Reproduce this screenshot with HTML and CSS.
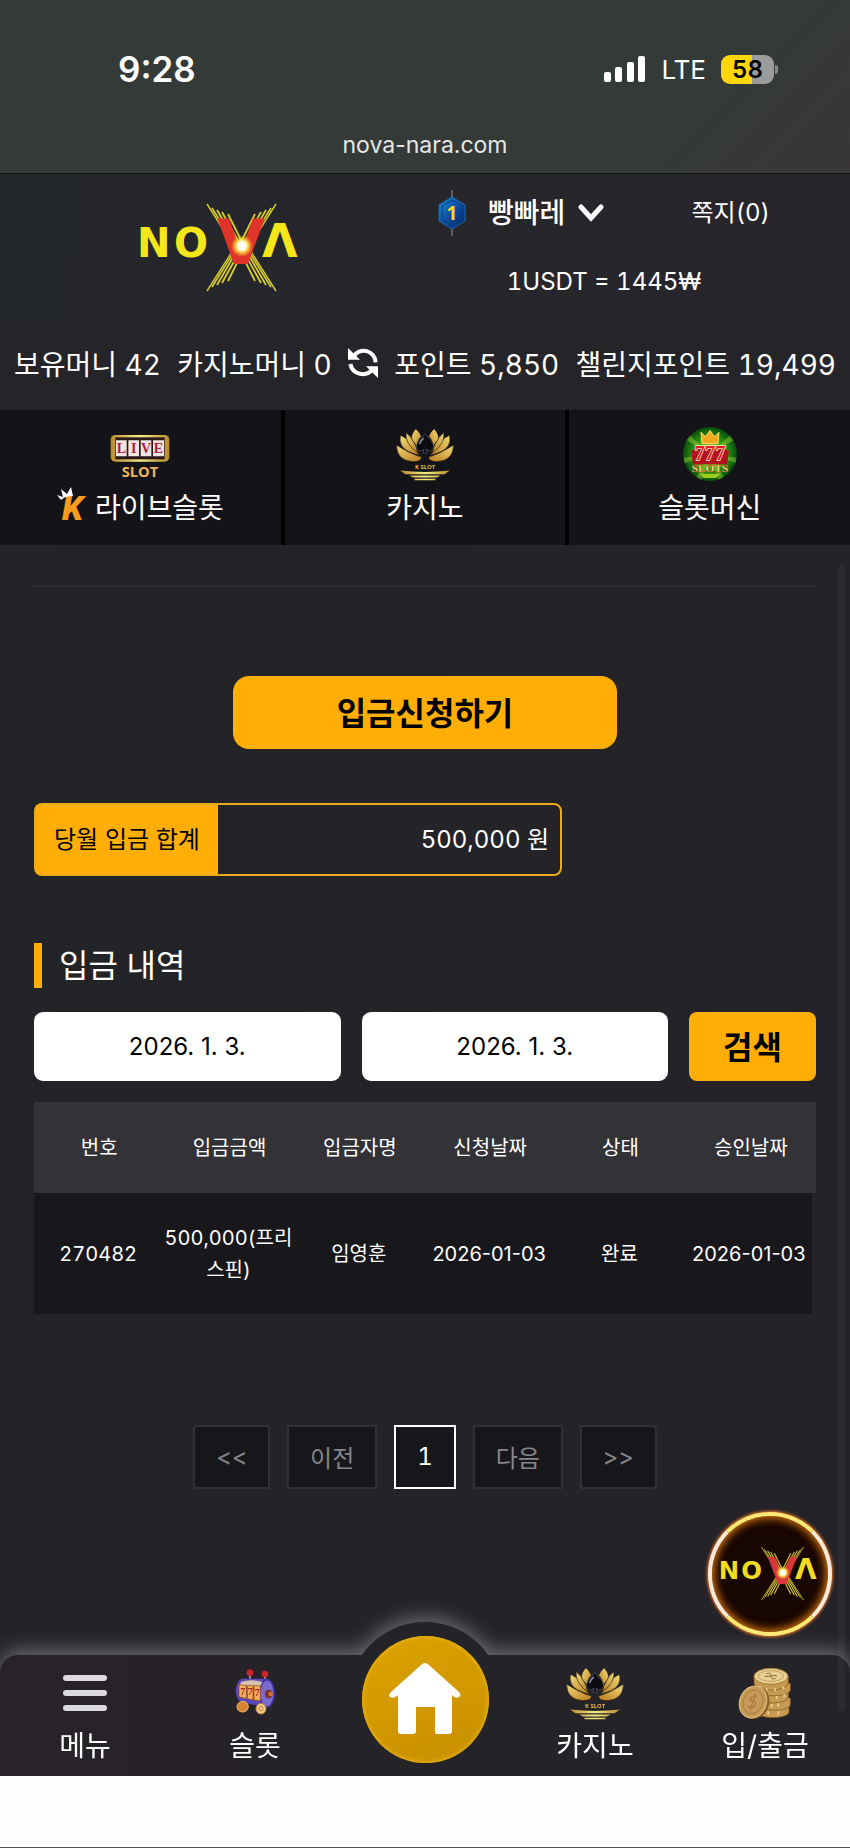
FILE: index.html
```html
<!DOCTYPE html>
<html lang="ko">
<head>
    <meta charset="UTF-8">
    <meta name="viewport" content="width=device-width, initial-scale=1.0">
    <title>NOVA - 입금신청</title>
    <link rel="stylesheet" href="styles.css">
</head>
<body>
    <!-- 공용 심볼 -->
    <svg class="symbols" aria-hidden="true">
        <defs>
            <linearGradient id="gold" x1="0" y1="0" x2="1" y2="1">
                <stop offset="0" stop-color="#f3dc7a"/>
                <stop offset="1" stop-color="#b97a1c"/>
            </linearGradient>
            <linearGradient id="gold-bar" x1="0" y1="0" x2="1" y2="0">
                <stop offset="0" stop-color="#b98a2c"/>
                <stop offset=".5" stop-color="#f8ee86"/>
                <stop offset="1" stop-color="#b98a2c"/>
            </linearGradient>
            <radialGradient id="flare">
                <stop offset="0" stop-color="#fff"/>
                <stop offset=".4" stop-color="#fffbe0"/>
                <stop offset=".6" stop-color="#ffe94a" stop-opacity=".8"/>
                <stop offset="1" stop-color="#ffd500" stop-opacity="0"/>
            </radialGradient>
            <radialGradient id="green">
                <stop offset="0" stop-color="#b5e61d"/>
                <stop offset=".6" stop-color="#2f9a12"/>
                <stop offset="1" stop-color="#064d0c"/>
            </radialGradient>
            <linearGradient id="blue" x1="0" y1="0" x2="1" y2="1">
                <stop offset="0" stop-color="#1d8fd8"/>
                <stop offset=".5" stop-color="#0b4fa0"/>
                <stop offset="1" stop-color="#06205c"/>
            </linearGradient>
            <g id="petals">
                <path d="M3 55Q3 104 55 106Q78 106 80 92Q45 82 3 55Z"/>
                <path d="M15 25Q8 60 40 75Q60 84 74 86Q50 40 15 25Z"/>
                <path d="M32 17Q28 50 68 80Q62 40 32 17Z"/>
                <path d="M62 5Q44 25 51 40Q66 56 66 70Q62 45 79 28Q74 15 62 5Z"/>
            </g>
            <g id="ray" fill="none" stroke="#d6cc30">
                <path d="M88 14L116 58" stroke-width="1.4"/>
                <path d="M93 18L118 58" stroke-width="1.6"/>
                <path d="M98 20L120 58" stroke-width="1.8"/>
                <path d="M103 22L123 58" stroke-width="1.8"/>
                <path d="M109 24L126 58" stroke-width="1.8"/>
            </g>
            <g id="streaks">
                <use href="#ray"/>
                <use href="#ray" transform="translate(245 0) scale(-1 1)"/>
                <use href="#ray" transform="translate(0 115) scale(1 -1)"/>
                <use href="#ray" transform="translate(245 115) scale(-1 -1)"/>
            </g>
            <g id="lotus">
                <g stroke="#141418" stroke-width="2">
                    <use href="#petals" fill="url(#gold)"/>
                    <use href="#petals" fill="url(#gold)" transform="translate(180 0) scale(-1 1)"/>
                </g>
                <path d="M90 20C80 36 64 44 64 60C64 73 80 77 87 67L84 80H96L93 67C100 77 116 73 116 60C116 44 100 36 90 20Z" fill="#0b0b12" stroke="#5b5b70" stroke-width="2"/>
                <path d="M73 52Q76 42 86 34" fill="none" stroke="#8d8da0" stroke-width="5"/>
                <path d="M14 133Q90 142 166 133L150 144H30ZM42 148H138L126 154H54ZM58 158H122V163H58Z" fill="url(#gold-bar)"/>
            </g>
        </defs>
    </svg>

    <div class="status">
        <div class="status-row">
            <span class="clock">9:28</span>
            <div class="status-icons">
                <svg width="42" height="28" viewBox="0 0 42 28" fill="#fff" aria-hidden="true">
                    <rect x="0" y="17" width="7" height="10" rx="2"/>
                    <rect x="11" y="12" width="7" height="15" rx="2"/>
                    <rect x="23" y="7" width="7" height="20" rx="2"/>
                    <rect x="34" y="1" width="7" height="26" rx="2"/>
                </svg>
                <span class="network">LTE</span>
                <span class="battery">58</span>
            </div>
        </div>
        <div class="url">nova-nara.com</div>
    </div>

    <header class="header">
        <a class="logo" href="#">
            <svg width="200" height="110" viewBox="2 4 200 110">
                <use href="#streaks"/>
                <text class="nova-text" x="18" y="67" font-size="40" fill="#f5e51b">N</text>
                <text class="nova-text" x="55" y="67" font-size="40" fill="#f5e51b">O</text>
                <text class="nova-text" x="143" y="67" font-size="46" fill="#f5e51b">Λ</text>
                <text class="nova-text" x="98" y="74" font-size="62" fill="#e0342b">V</text>
                <circle cx="123" cy="56" r="11" fill="url(#flare)"/>
            </svg>
        </a>
        <div class="account">
            <div class="account-row">
                <button class="user" type="button">
                    <svg width="28" height="48" viewBox="0 0 28 48" aria-hidden="true">
                        <path d="M14 1V47" stroke="#9a9a90" stroke-width="1"/>
                        <path d="M14 8L27 16V32L14 40L1 32V16Z" fill="url(#blue)" stroke="#1b6bb0"/>
                        <path d="M14 11L24 17V31L14 37L4 31V17Z" fill="none" stroke="#0a3a80"/>
                        <text class="badge-text" x="14" y="31" font-size="19" fill="#ffd52e" text-anchor="middle">1</text>
                    </svg>
                    <span>빵빠레</span>
                    <svg width="28" height="18" viewBox="0 0 28 18" fill="none" stroke="#fff" stroke-width="5" stroke-linecap="round" aria-hidden="true">
                        <path d="M4 3L14 14L24 3"/>
                    </svg>
                </button>
                <a class="note" href="#">쪽지(0)</a>
            </div>
            <div class="rate">1USDT = 1445₩</div>
        </div>
    </header>

    <div class="money">
        <span>보유머니 42</span>
        <span>카지노머니 0</span>
        <button class="refresh" type="button" aria-label="새로고침">
            <svg width="30" height="30" viewBox="0 0 90 90" aria-hidden="true">
                <path d="M16 26A36 36 0 0 1 83 43M7 48A38 38 0 0 0 74 64" fill="none" stroke="#fff" stroke-width="12"/>
                <path d="M0 0L36 35H0ZM90 90L54 55H90Z" fill="#fff"/>
            </svg>
        </button>
        <span>포인트 5,850</span>
        <span>챌린지포인트 19,499</span>
    </div>

    <nav class="games">
        <a href="#">
            <svg width="60" height="54" viewBox="0 0 180 162" aria-hidden="true">
                <rect x="2" y="24" width="176" height="80" rx="14" fill="url(#gold-bar)"/>
                <rect x="16" y="31" width="148" height="66" fill="#2a1718"/>
                <path d="M18 40H50V88H18ZM55 40H87V88H55ZM92 40H124V88H92ZM129 40H162V88H129Z" fill="#f0e4e0"/>
                <g class="live-text" font-size="42" fill="#a8203c" text-anchor="middle">
                    <text x="34" y="78">L</text><text x="71" y="78">I</text><text x="108" y="78">V</text><text x="145" y="78">E</text>
                </g>
                <text class="slot-text" x="90" y="150" font-size="44" fill="#f1b45c" text-anchor="middle">SLOT</text>
            </svg>
            <span class="game-name">
                <svg width="34" height="44" viewBox="0 -2 34 44" aria-hidden="true">
                    <text class="k-text" x="5" y="34" font-size="34" fill="#f89c1c">K</text>
                    <path d="M4 14L0 9L6 11L4 3L10 8L14 1L16 10Q8 10 4 14Z" fill="#fff"/>
                </svg>
                라이브슬롯
            </span>
        </a>
        <a href="#">
            <svg width="60" height="54" viewBox="0 0 180 165" aria-hidden="true">
                <use href="#lotus"/>
                <text class="slot-text" x="90" y="128" font-size="18" fill="#e8b456" text-anchor="middle">K SLOT</text>
            </svg>
            <span class="game-name">카지노</span>
        </a>
        <a href="#">
            <svg width="54" height="54" viewBox="0 0 162 162" aria-hidden="true">
                <circle cx="81" cy="81" r="81" fill="url(#green)"/>
                <path d="M81 81L10 40L22 26ZM81 81L140 26L152 40ZM81 81L2 92L4 108ZM81 81L160 92L158 108ZM81 81L40 150L56 158ZM81 81L122 150L106 158Z" fill="#c9f04a" opacity=".35"/>
                <path d="M57 50L54 16L68 30L81 10L94 30L108 16L105 50Z" fill="#f6a81c" stroke="#ffe06a" stroke-width="3"/>
                <path d="M24 72Q81 40 138 72L132 112H30Z" fill="#b3121f"/>
                <text class="seven-text" x="81" y="100" font-size="62" fill="#e21a2c" stroke="#fff3c4" stroke-width="4" text-anchor="middle">777</text>
                <text class="live-text" x="81" y="134" font-size="34" fill="#ffe79a" stroke="#c2410c" stroke-width="1" text-anchor="middle">SLOTS</text>
                <path d="M50 140H112L100 153H62Z" fill="#9ccc1c"/>
            </svg>
            <span class="game-name">슬롯머신</span>
        </a>
    </nav>

    <main class="content">
        <hr class="divider">
        <button class="apply" type="button">입금신청하기</button>

        <div class="total">
            <span class="total-label">당월 입금 합계</span>
            <span class="total-value">500,000 원</span>
        </div>

        <h2 class="title">입금 내역</h2>
        <form class="search">
            <input type="text" aria-label="시작일" value="2026. 1. 3.">
            <input type="text" aria-label="종료일" value="2026. 1. 3.">
            <button type="button">검색</button>
        </form>

        <table class="history">
            <thead>
                <tr>
                    <th>번호</th>
                    <th>입금금액</th>
                    <th>입금자명</th>
                    <th>신청날짜</th>
                    <th>상태</th>
                    <th>승인날짜</th>
                </tr>
            </thead>
            <tbody>
                <tr>
                    <td>270482</td>
                    <td>500,000(프리스핀)</td>
                    <td>임영훈</td>
                    <td class="date">2026-01-03</td>
                    <td>완료</td>
                    <td class="date">2026-01-03</td>
                </tr>
            </tbody>
        </table>

        <div class="paging">
            <button type="button">&lt;&lt;</button>
            <button type="button">이전</button>
            <button type="button" class="active">1</button>
            <button type="button">다음</button>
            <button type="button">&gt;&gt;</button>
        </div>

        <a class="floating" href="#">
            <svg width="122" height="67" viewBox="2 4 200 110">
                <use href="#streaks"/>
                <text class="nova-text" x="18" y="67" font-size="40" fill="#f0dc22">N</text>
                <text class="nova-text" x="55" y="67" font-size="40" fill="#f0dc22">O</text>
                <text class="nova-text" x="143" y="67" font-size="46" fill="#f0dc22">Λ</text>
                <text class="nova-text" x="98" y="74" font-size="62" fill="#d8383a">V</text>
                <circle cx="123" cy="56" r="11" fill="url(#flare)"/>
            </svg>
        </a>
        <div class="scrollbar"></div>
    </main>

    <nav class="bottom">
        <a href="#">
            <svg width="60" height="54" viewBox="0 0 60 54" fill="#dcd9e0" aria-hidden="true">
                <rect x="8" y="9" width="44" height="6" rx="3"/>
                <rect x="8" y="24" width="44" height="6" rx="3"/>
                <rect x="8" y="39" width="44" height="6" rx="3"/>
            </svg>
            <span>메뉴</span>
        </a>
        <a href="#">
            <svg width="60" height="54" viewBox="0 0 180 162" aria-hidden="true">
                <path d="M75 40V20M120 44V22" stroke="#a8a0b0" stroke-width="5"/>
                <circle cx="75" cy="20" r="10" fill="#c8262c"/>
                <circle cx="120" cy="24" r="10" fill="#c8262c"/>
                <path d="M50 38H125Q148 50 148 80Q146 112 124 124L46 108Q32 94 32 74Q34 46 50 38Z" fill="#5b48b8"/>
                <ellipse cx="126" cy="82" rx="22" ry="41" fill="#7a6ad0" stroke="#41309a" stroke-width="5"/>
                <ellipse cx="131" cy="84" rx="11" ry="13" fill="#7b3325"/>
                <circle cx="137" cy="84" r="7" fill="#d96d2c"/>
                <path d="M48 48Q80 38 112 48L106 60H44Z" fill="#d8c3ae"/>
                <path d="M42 56L64 58V98L42 92ZM67 58L84 59V101L67 98ZM87 59L106 60V104L87 102Z" fill="#f3b05a" stroke="#97451e" stroke-width="2"/>
                <g class="live-text" font-size="30" fill="#b31f2a" text-anchor="middle">
                    <text x="53" y="86">7</text><text x="76" y="88">7</text><text x="97" y="90">7</text>
                </g>
                <ellipse cx="53" cy="122" rx="17" ry="16" fill="#d98332" stroke="#f5b96a" stroke-width="3"/>
                <ellipse cx="108" cy="128" rx="15" ry="16" fill="#f2cd84" stroke="#b9803a" stroke-width="3"/>
                <ellipse cx="108" cy="128" rx="6" ry="7" fill="none" stroke="#b9803a" stroke-width="3"/>
            </svg>
            <span>슬롯</span>
        </a>
        <a class="home" href="#" aria-label="홈">
            <span class="home-coin">
                <svg width="72" height="72" viewBox="0 0 72 72" fill="#fff" aria-hidden="true">
                    <path d="M36 0Q38 0 40 2L70 29Q73 33 70 34Q67 36 64 33L63 32V68Q63 71 60 71H48Q46 71 46 68V44H27V68Q27 71 24 71H12Q9 71 9 68V32L8 33Q4 36 1 34Q-1 32 2 29L32 2Q34 0 36 0Z"/>
                </svg>
            </span>
        </a>
        <a href="#">
            <svg width="60" height="54" viewBox="0 0 180 165" aria-hidden="true">
                <use href="#lotus"/>
                <text class="slot-text" x="90" y="128" font-size="18" fill="#e8b456" text-anchor="middle">K SLOT</text>
            </svg>
            <span>카지노</span>
        </a>
        <a href="#">
            <svg width="60" height="54" viewBox="0 0 180 162" aria-hidden="true">
                <g fill="#c79a52" stroke="#80561f" stroke-width="2">
                    <path d="M66 118V138A48 17 0 0 0 162 138V118Z"/>
                    <path d="M70 96V116A48 17 0 0 0 166 116V96Z"/>
                    <path d="M64 74V94A48 17 0 0 0 160 94V74Z"/>
                    <path d="M68 52V72A48 17 0 0 0 166 72V52Z"/>
                    <path d="M57 30V50A51 22 0 0 0 160 50V30Z"/>
                </g>
                <path d="M75 60V68M95 66V74M120 67V75M145 61V69M90 88V98M125 90V100M148 84V94M130 112V122M110 114V124M100 136V146M130 136V146" stroke="#f0d190" stroke-width="5"/>
                <ellipse cx="108" cy="31" rx="51" ry="24" fill="#e9cf94" stroke="#a47a38" stroke-width="3"/>
                <ellipse cx="108" cy="30" rx="38" ry="16" fill="none" stroke="#b18a4a" stroke-width="2"/>
                <path d="M94 24Q108 16 108 30T124 36M88 32L126 28" fill="none" stroke="#94702f" stroke-width="3"/>
                <ellipse cx="60" cy="110" rx="42" ry="50" fill="#8b6027" transform="rotate(22 60 110)"/>
                <ellipse cx="54" cy="108" rx="40" ry="49" fill="#c79a58" stroke="#e3c083" stroke-width="3" transform="rotate(22 54 108)"/>
                <ellipse cx="54" cy="108" rx="29" ry="37" fill="none" stroke="#96703a" stroke-width="2" transform="rotate(22 54 108)"/>
                <path d="M66 92Q48 86 46 102Q68 106 60 120Q50 130 38 120M62 82L46 132" fill="none" stroke="#a67c40" stroke-width="4"/>
            </svg>
            <span>입/출금</span>
        </a>
    </nav>
    <div class="safe-area"></div>
</body>
</html>
```
FILE: styles.css
```css
* {
    box-sizing: border-box;
}

body {
    margin: 0;
    min-height: 100vh;
    display: flex;
    flex-direction: column;
    background: #242328;
    color: #fff;
    font-family: Inter, "Noto Sans CJK KR", sans-serif;
    font-size: 28px;
    font-variant-numeric: tabular-nums;
}

a {
    color: inherit;
    text-decoration: none;
}

button {
    padding: 0;
    border: 0;
    background: none;
    color: inherit;
    font: inherit;
    cursor: pointer;
}

svg {
    display: block;
}

.symbols {
    position: absolute;
    width: 0;
    height: 0;
}

.nova-text {
    font-family: "DejaVu Sans", sans-serif;
    font-weight: bold;
}

.slot-text,
.badge-text {
    font-family: "Open Sans", sans-serif;
    font-weight: bold;
}

.live-text,
.seven-text {
    font-family: "Liberation Serif", serif;
    font-weight: bold;
}

.seven-text {
    paint-order: stroke;
}

.k-text {
    font-family: Roboto, sans-serif;
    font-weight: 900;
    font-style: italic;
}

/* 상태바 */
.status {
    padding: 45px 0 12px;
    border-bottom: 1px solid #111415;
    background: linear-gradient(135deg, #343a37 80%, #3a3637);
}

.status-row {
    display: flex;
    align-items: center;
    justify-content: space-between;
    height: 48px;
    margin-bottom: 36px;
    padding: 0 72px 0 118px;
}

.clock {
    font-size: 35px;
    font-weight: 600;
    font-variant-numeric: normal;
}

.status-icons {
    display: flex;
    align-items: center;
    gap: 15px;
}

.network {
    font-size: 26px;
}

.battery {
    position: relative;
    width: 53px;
    height: 29px;
    margin-right: 4px;
    border-radius: 9px;
    background: linear-gradient(90deg, #ffd60a 58%, #9b9b9b 58%);
    color: #000;
    font-size: 24px;
    font-weight: 600;
    line-height: 29px;
    text-align: center;
}

.battery::after {
    content: "";
    position: absolute;
    top: 10px;
    right: -4px;
    width: 3px;
    height: 9px;
    border-radius: 0 3px 3px 0;
    background: #8b8b8b;
}

.url {
    color: #e6e8e7;
    font-size: 23px;
    font-variant-numeric: normal;
    line-height: 32px;
    text-align: center;
}

/* 헤더 */
.header {
    display: flex;
    align-items: center;
    height: 150px;
    background: linear-gradient(100deg, #24272b, #28252b);
}

.logo {
    display: flex;
    justify-content: center;
    width: 52%;
}

.account {
    flex: 1;
    display: flex;
    flex-direction: column;
    gap: 31px;
    margin-right: 80px;
    margin-left: -4px;
    padding-bottom: 3px;
    line-height: 38px;
}

.account-row {
    display: flex;
    align-items: center;
    justify-content: space-between;
}

.user {
    display: flex;
    align-items: center;
    height: 38px;
    font-weight: 500;
}

.user span {
    margin: 0 12px 0 22px;
}

.note {
    font-size: 24px;
}

.rate {
    font-size: 24px;
    text-align: center;
}

/* 보유금액 */
.money {
    display: flex;
    align-items: center;
    justify-content: space-between;
    height: 86px;
    padding: 0 14px 8px;
    background: #242429;
    white-space: nowrap;
}

/* 게임 메뉴 */
.games {
    display: grid;
    grid-template-columns: repeat(3, 1fr);
    gap: 4px;
    background: #000;
}

.games a {
    display: flex;
    flex-direction: column;
    align-items: center;
    height: 135px;
    padding-top: 17px;
    background: #141418;
}

.game-name {
    display: flex;
    align-items: center;
    gap: 4px;
    height: 40px;
    margin-top: 5px;
}

/* 본문 */
.content {
    position: relative;
    flex: 1;
    padding: 40px 34px 0;
    background: linear-gradient(100deg, #222427, #242328 50%, #252329);
}

.divider {
    height: 2px;
    margin: 0;
    border: 0;
    background: #2c2c31;
}

.apply {
    display: block;
    width: 384px;
    height: 73px;
    margin: 89px auto 54px;
    padding-bottom: 4px;
    border-radius: 16px;
    background: #ffae05;
    color: #000;
    font-size: 32px;
    font-weight: bold;
}

.total {
    display: flex;
    align-items: center;
    justify-content: space-between;
    max-width: 528px;
    height: 73px;
    border: 2px solid #eba91c;
    border-radius: 8px;
    font-size: 24px;
}

.total-label {
    display: flex;
    align-items: center;
    justify-content: center;
    width: 182px;
    height: 100%;
    padding-bottom: 4px;
    background: #ffae05;
    color: #000;
    font-family: "Noto Sans CJK KR", sans-serif;
}

.total-value {
    padding: 0 11px 4px 0;
}

.title {
    margin: 67px 0 24px;
    padding-left: 17px;
    border-left: 8px solid #ffae05;
    font-size: 32px;
    font-weight: normal;
    line-height: 45px;
}

.search {
    display: grid;
    grid-template-columns: 1fr 1fr 127px;
    gap: 21px;
    height: 69px;
    margin-bottom: 21px;
}

.search input {
    min-width: 0;
    border: 0;
    border-radius: 9px;
    background: #fff;
    color: #000;
    font-family: Inter, sans-serif;
    font-size: 24px;
    text-align: center;
}

.search button {
    padding-bottom: 4px;
    border-radius: 8px;
    background: #ffae05;
    color: #000;
    font-size: 32px;
    font-weight: bold;
}

.history {
    width: 100%;
    table-layout: fixed;
    border-collapse: separate;
    border-spacing: 0;
    font-size: 20px;
    line-height: 32px;
    text-align: center;
}

.history th {
    height: 91px;
    padding: 0;
    background: #333237;
    font-weight: normal;
}

.history td {
    height: 121px;
    padding: 0 2px 0 0;
    background: #18171c;
}

.history td:last-child {
    padding: 0;
    border-right: 4px solid #252329;
}

.history .date {
    font-variant-numeric: normal;
    white-space: nowrap;
}

.paging {
    display: flex;
    justify-content: center;
    gap: 17px;
    margin-top: 111px;
}

.paging button {
    height: 64px;
    padding: 0 21px 2px;
    border: 2px solid #303035;
    background: #17171b;
    color: #85858a;
    font-size: 24px;
}

.paging button:first-child {
    border-radius: 4px 0 0 4px;
}

.paging button:last-child {
    border-radius: 0 4px 4px 0;
}

.paging .active {
    border-color: #fff;
    color: #fff;
}

.floating {
    position: absolute;
    right: 18px;
    bottom: 19px;
    z-index: 2;
    display: flex;
    align-items: center;
    justify-content: center;
    width: 124px;
    height: 124px;
    border: 4px solid;
    border-color: #ffe873 #ffe9d8;
    border-radius: 50%;
    background: #180600;
    box-shadow: 0 0 3px 1px #e8762a, inset 0 0 8px 2px #e07a10;
}

.floating svg {
    flex: none;
}

.scrollbar {
    position: absolute;
    top: 20px;
    right: 5px;
    bottom: -56px;
    z-index: 3;
    width: 7px;
    border-radius: 4px;
    background: rgba(255, 255, 255, .04);
}

/* 하단 메뉴 */
.bottom {
    position: relative;
    z-index: 1;
    display: grid;
    grid-template-columns: repeat(5, 1fr);
    height: 121px;
    border-radius: 18px 18px 0 0;
    background: linear-gradient(90deg, #272328, #242328);
    filter: drop-shadow(0 -4px 10px rgba(255, 255, 255, .35));
}

.bottom a {
    display: flex;
    flex-direction: column;
    align-items: center;
    gap: 6px;
    padding-top: 11px;
    line-height: 40px;
}

.bottom .home {
    justify-self: center;
    justify-content: center;
    width: 154px;
    height: 154px;
    margin-top: -33px;
    padding: 0;
    border-radius: 50%;
    background: #242328;
}

.home-coin {
    display: flex;
    align-items: center;
    justify-content: center;
    width: 127px;
    height: 127px;
    border-radius: 50%;
    background: linear-gradient(160deg, #dca200, #c88f00);
    box-shadow: inset 0 0 4px 1px #e9b40c;
}

.safe-area {
    position: relative;
    z-index: 2;
    height: 72px;
    border-bottom: 1px solid #555;
    background: #fdfdfd;
}
```
